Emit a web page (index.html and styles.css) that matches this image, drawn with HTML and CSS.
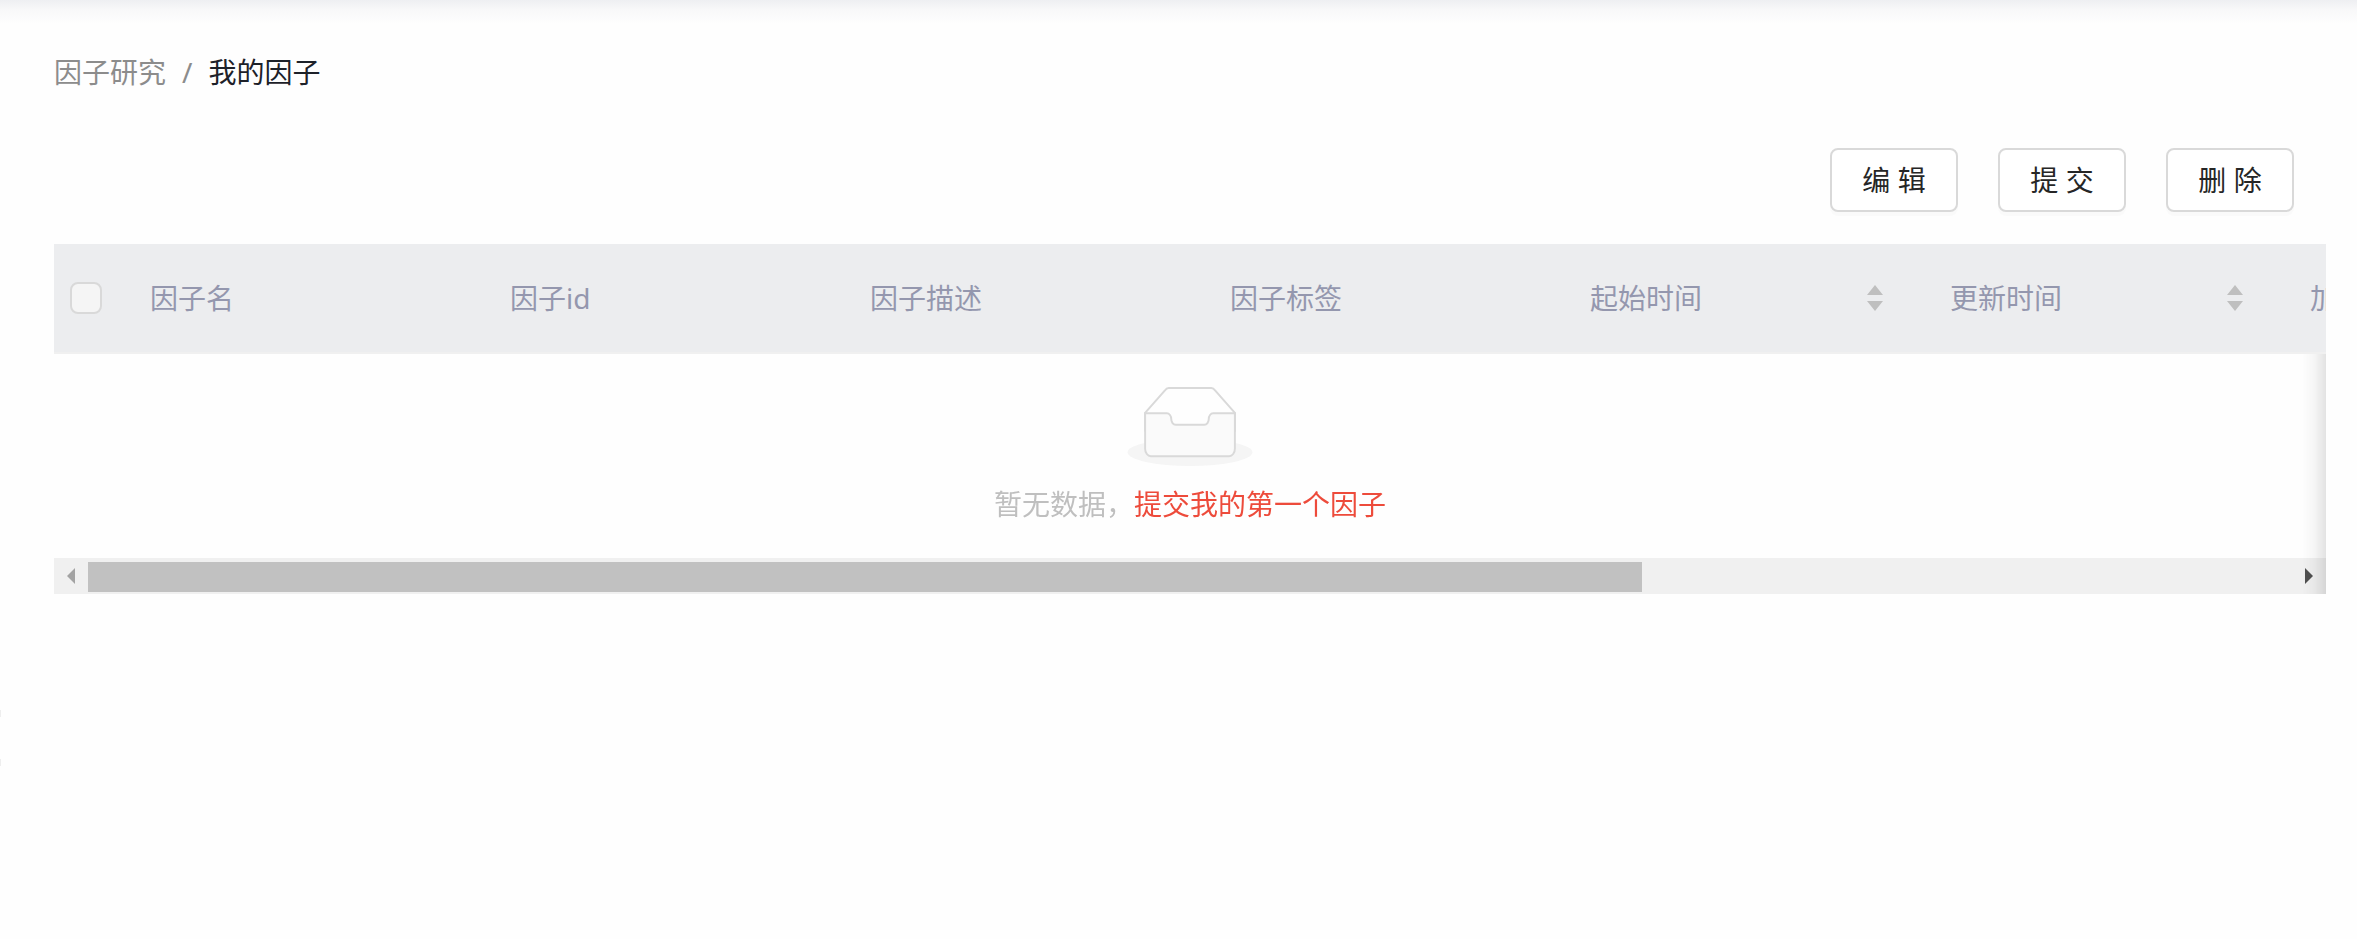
FILE: index.html
```
<!DOCTYPE html>
<html lang="zh-CN">
<head>
    <meta charset="UTF-8">
    <meta name="viewport" content="width=device-width, initial-scale=1.0">
    <title>我的因子</title>
    <link rel="stylesheet" href="styles.css">
</head>
<body>
    <div class="top-shadow"></div>
    <div class="side-handle"></div>
    <main class="page">
        <nav class="breadcrumb">
            <a href="#">因子研究</a>
            <span class="separator">/</span>
            <span class="current">我的因子</span>
        </nav>

        <div class="toolbar">
            <button type="button">编 辑</button>
            <button type="button">提 交</button>
            <button type="button">删 除</button>
        </div>

        <div class="table-container">
            <div class="table-scroll">
                <table>
                    <thead>
                        <tr>
                            <th class="select-col"><input type="checkbox" aria-label="全选"></th>
                            <th>因子名</th>
                            <th>因子id</th>
                            <th>因子描述</th>
                            <th>因子标签</th>
                            <th>
                                <div class="sortable">起始时间
                                    <svg width="16" height="26" viewBox="0 0 16 26"><path d="M8 0L16 10H0zM0 16H16L8 26z"/></svg>
                                </div>
                            </th>
                            <th>
                                <div class="sortable">更新时间
                                    <svg width="16" height="26" viewBox="0 0 16 26"><path d="M8 0L16 10H0zM0 16H16L8 26z"/></svg>
                                </div>
                            </th>
                            <th>加密</th>
                        </tr>
                    </thead>
                    <tbody>
                        <tr>
                            <td colspan="8">
                                <div class="empty">
                                    <svg class="empty-image" width="126" height="80" viewBox="0 0 64 41">
                                        <g transform="translate(0 1)" fill="none" fill-rule="evenodd">
                                            <ellipse fill="#f5f5f5" cx="32" cy="33" rx="32" ry="7"/>
                                            <g fill-rule="nonzero" stroke="#d9d9d9">
                                                <path d="M55 12.76L44.854 1.258C44.367.474 43.656 0 42.907 0H21.093c-.749 0-1.46.474-1.947 1.257L9 12.761V22h46v-9.24z"/>
                                                <path d="M41.613 15.931c0-1.605.994-2.93 2.227-2.931H55v18.137C55 33.26 53.68 35 52.05 35h-40.1C10.32 35 9 33.259 9 31.137V13h11.16c1.233 0 2.227 1.323 2.227 2.928v.022c0 1.605 1.005 2.901 2.237 2.901h14.752c1.232 0 2.237-1.308 2.237-2.913v-.007z" fill="#fafafa"/>
                                            </g>
                                        </g>
                                    </svg>
                                    <p>暂无数据，<a href="#">提交我的第一个因子</a></p>
                                </div>
                            </td>
                        </tr>
                    </tbody>
                </table>
            </div>
            <div class="scrollbar">
                <button type="button" class="scroll-left" aria-label="向左滚动">
                    <svg width="8" height="16" viewBox="0 0 8 16"><path d="M8 0V16L0 8z"/></svg>
                </button>
                <div class="track"><div class="thumb"></div></div>
                <button type="button" class="scroll-right" aria-label="向右滚动">
                    <svg width="8" height="16" viewBox="0 0 8 16"><path d="M0 0V16L8 8z"/></svg>
                </button>
            </div>
        </div>
    </main>
</body>
</html>
```
FILE: styles.css
```
/* Reset and basic layout */
* {
    margin: 0;
    padding: 0;
    box-sizing: border-box;
}

body {
    font-family: "Noto Sans", "Noto Sans CJK SC", sans-serif;
    font-size: 28px;
    line-height: 44px;
    color: #262626;
    background-color: #fefefe;
}

a {
    text-decoration: none;
}

/* Shadow under the site header */
.top-shadow {
    position: absolute;
    top: 0;
    left: 0;
    right: 0;
    height: 24px;
    background: linear-gradient(#eeeff2, #f8f8f9 40%, #fefefe);
}

/* Edge of the collapsed side menu */
.side-handle {
    position: absolute;
    top: 710px;
    left: 0;
    width: 1px;
    height: 56px;
    border-top: 7px solid #eee;
    border-bottom: 7px solid #eee;
}

.page {
    padding: 50px 31px 0 54px;
}

.breadcrumb {
    display: flex;
    gap: 16px;
}

.breadcrumb a, .separator {
    color: #8c8c8c;
}

.current {
    color: #1d2129;
}

/* Buttons above the table */
.toolbar {
    display: flex;
    justify-content: flex-end;
    gap: 40px;
    padding: 54px 32px 32px 0;
}

.toolbar button {
    min-width: 128px;
    height: 64px;
    font: inherit;
    color: #262626;
    background-color: #fff;
    border: 2px solid #d9d9d9;
    border-radius: 8px;
    box-shadow: 0 4px 0 rgba(0, 0, 0, 0.016);
    cursor: pointer;
}

/* Table */
.table-container {
    position: relative;
    container-type: inline-size;
}

.table-container::after {
    content: "";
    position: absolute;
    top: 110px;
    right: 0;
    bottom: 0;
    width: 24px;
    background: linear-gradient(to right, rgba(0, 0, 0, 0), rgba(0, 0, 0, 0.03) 50%, rgba(0, 0, 0, 0.11));
    pointer-events: none;
}

.table-scroll {
    overflow: hidden;
}

table {
    width: 2600px;
    table-layout: fixed;
    border-collapse: separate;
    border-spacing: 0;
}

th {
    height: 110px;
    padding: 0 16px;
    text-align: left;
    font-weight: 400;
    color: #9497ae;
    background-color: #ecedef;
    border-bottom: 2px solid #f0f0f0;
}

.select-col {
    width: 80px;
}

input[type="checkbox"] {
    display: block;
    appearance: none;
    width: 32px;
    height: 32px;
    background-color: #f5f5f5;
    border: 2px solid #d9d9d9;
    border-radius: 8px;
}

.sortable {
    display: flex;
    justify-content: space-between;
    align-items: center;
    padding-right: 35px;
}

.sortable svg {
    fill: #bfbfbf;
}

/* Empty state, stays centred in the visible part of the table */
.empty {
    position: sticky;
    left: 0;
    width: 100cqw;
    padding: 32px 16px 32px;
    text-align: center;
    color: #bfbfbf;
}

.empty-image {
    display: block;
    margin: 0 auto 16px;
}

.empty a {
    color: #ed4b3b;
}

/* Horizontal scrollbar */
.scrollbar {
    display: flex;
    height: 36px;
    background-color: #f0f0f0;
}

.scrollbar button {
    display: flex;
    justify-content: center;
    align-items: center;
    width: 34px;
    border: none;
    background: none;
}

.scroll-left {
    fill: #a3a3a3;
}

.scroll-right {
    fill: #505050;
}

.track {
    flex: 1;
    padding: 4px 0 2px;
}

.thumb {
    width: 70.5%;
    height: 100%;
    background-color: #c1c1c1;
}
```
